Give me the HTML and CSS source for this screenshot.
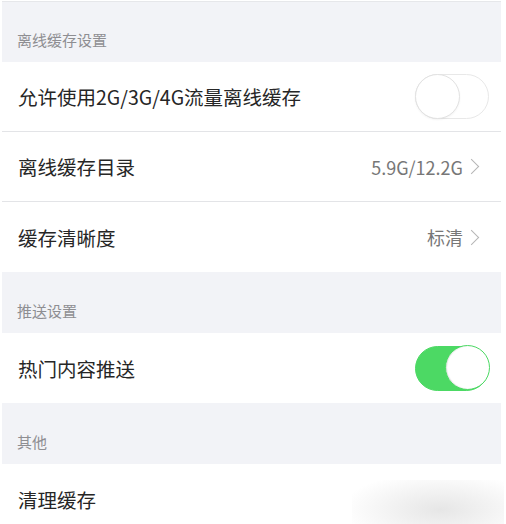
FILE: index.html
```html
<!DOCTYPE html>
<html lang="zh-CN">
<head>
	<meta charset="UTF-8">
	<title>设置</title>
	<link rel="stylesheet" href="styles.css">
</head>
<body>
	<div class="settings">
		<div class="group-title first">离线缓存设置</div>
		<div class="row">
			<span class="label">允许使用2G/3G/4G流量离线缓存</span>
			<span class="switch"><span class="knob"></span></span>
		</div>
		<div class="row">
			<span class="label">离线缓存目录</span>
			<span class="value">5.9G/12.2G<i class="chevron"></i></span>
		</div>
		<div class="row">
			<span class="label">缓存清晰度</span>
			<span class="value">标清<i class="chevron"></i></span>
		</div>

		<div class="group-title">推送设置</div>
		<div class="row">
			<span class="label">热门内容推送</span>
			<span class="switch on"><span class="knob"></span></span>
		</div>

		<div class="group-title">其他</div>
		<div class="row last">
			<span class="label">清理缓存</span>
		</div>
		<div class="smudge"></div>
	</div>
</body>
</html>
```

FILE: styles.css
```css
*{ box-sizing: border-box; }
body{
	margin: 0;
	background: #fff;
	font-family: "Noto Sans CJK SC", "Noto Sans", sans-serif;
}
.settings{
	position: relative;
	width: 499px;
	margin: 1px 0 0 2px;
}
.group-title{
	height: 61px;
	background: #f2f3f7;
	display: flex;
	align-items: flex-end;
	padding: 0 15px 12px;
	font-size: 15px;
	line-height: 20px;
	color: #8e8e92;
}
.group-title.first{
	border-top: 1px solid #e6e7ea;
}
.row{
	height: 70px;
	display: flex;
	align-items: center;
	justify-content: space-between;
	padding: 0 12px 0 16px;
	border-bottom: 1px solid #e3e4e7;
	font-size: 19.5px;
	color: #262626;
}
.row:has(+ .group-title), .row.last{
	border-bottom: 0;
}
.value{
	display: flex;
	align-items: center;
	margin-right: 12px;
	font-size: 18px;
	color: #777;
}
.chevron{
	width: 11px;
	height: 11px;
	margin-left: 3px;
	border-top: 1.2px solid #b5b5b5;
	border-right: 1.2px solid #b5b5b5;
	transform: rotate(45deg);
}
.switch{
	position: relative;
	width: 74px;
	height: 45px;
	border-radius: 23px;
	background: #fff;
	border: 1.5px solid #e8e8e8;
}
.knob{
	position: absolute;
	top: -1.5px;
	left: -1.5px;
	width: 45px;
	height: 45px;
	border-radius: 50%;
	background: #fff;
	border: 1.5px solid #e2e2e2;
	box-shadow: 0 1px 2px rgba(0,0,0,.05);
}
.switch.on{
	background: #4cd964;
	border-color: #4cd964;
}
.switch.on .knob{
	left: auto;
	right: -1.5px;
	border: 1.5px solid #4cd964;
	box-shadow: inset 1px 0 1px rgba(0,0,0,.12);
}
.smudge{
	position: absolute;
	left: 350px;
	bottom: 0;
	width: 152px;
	height: 54px;
	background: radial-gradient(ellipse 65% 70% at 58% 55%, #e6e6e6, rgba(255,255,255,0));
}
```
